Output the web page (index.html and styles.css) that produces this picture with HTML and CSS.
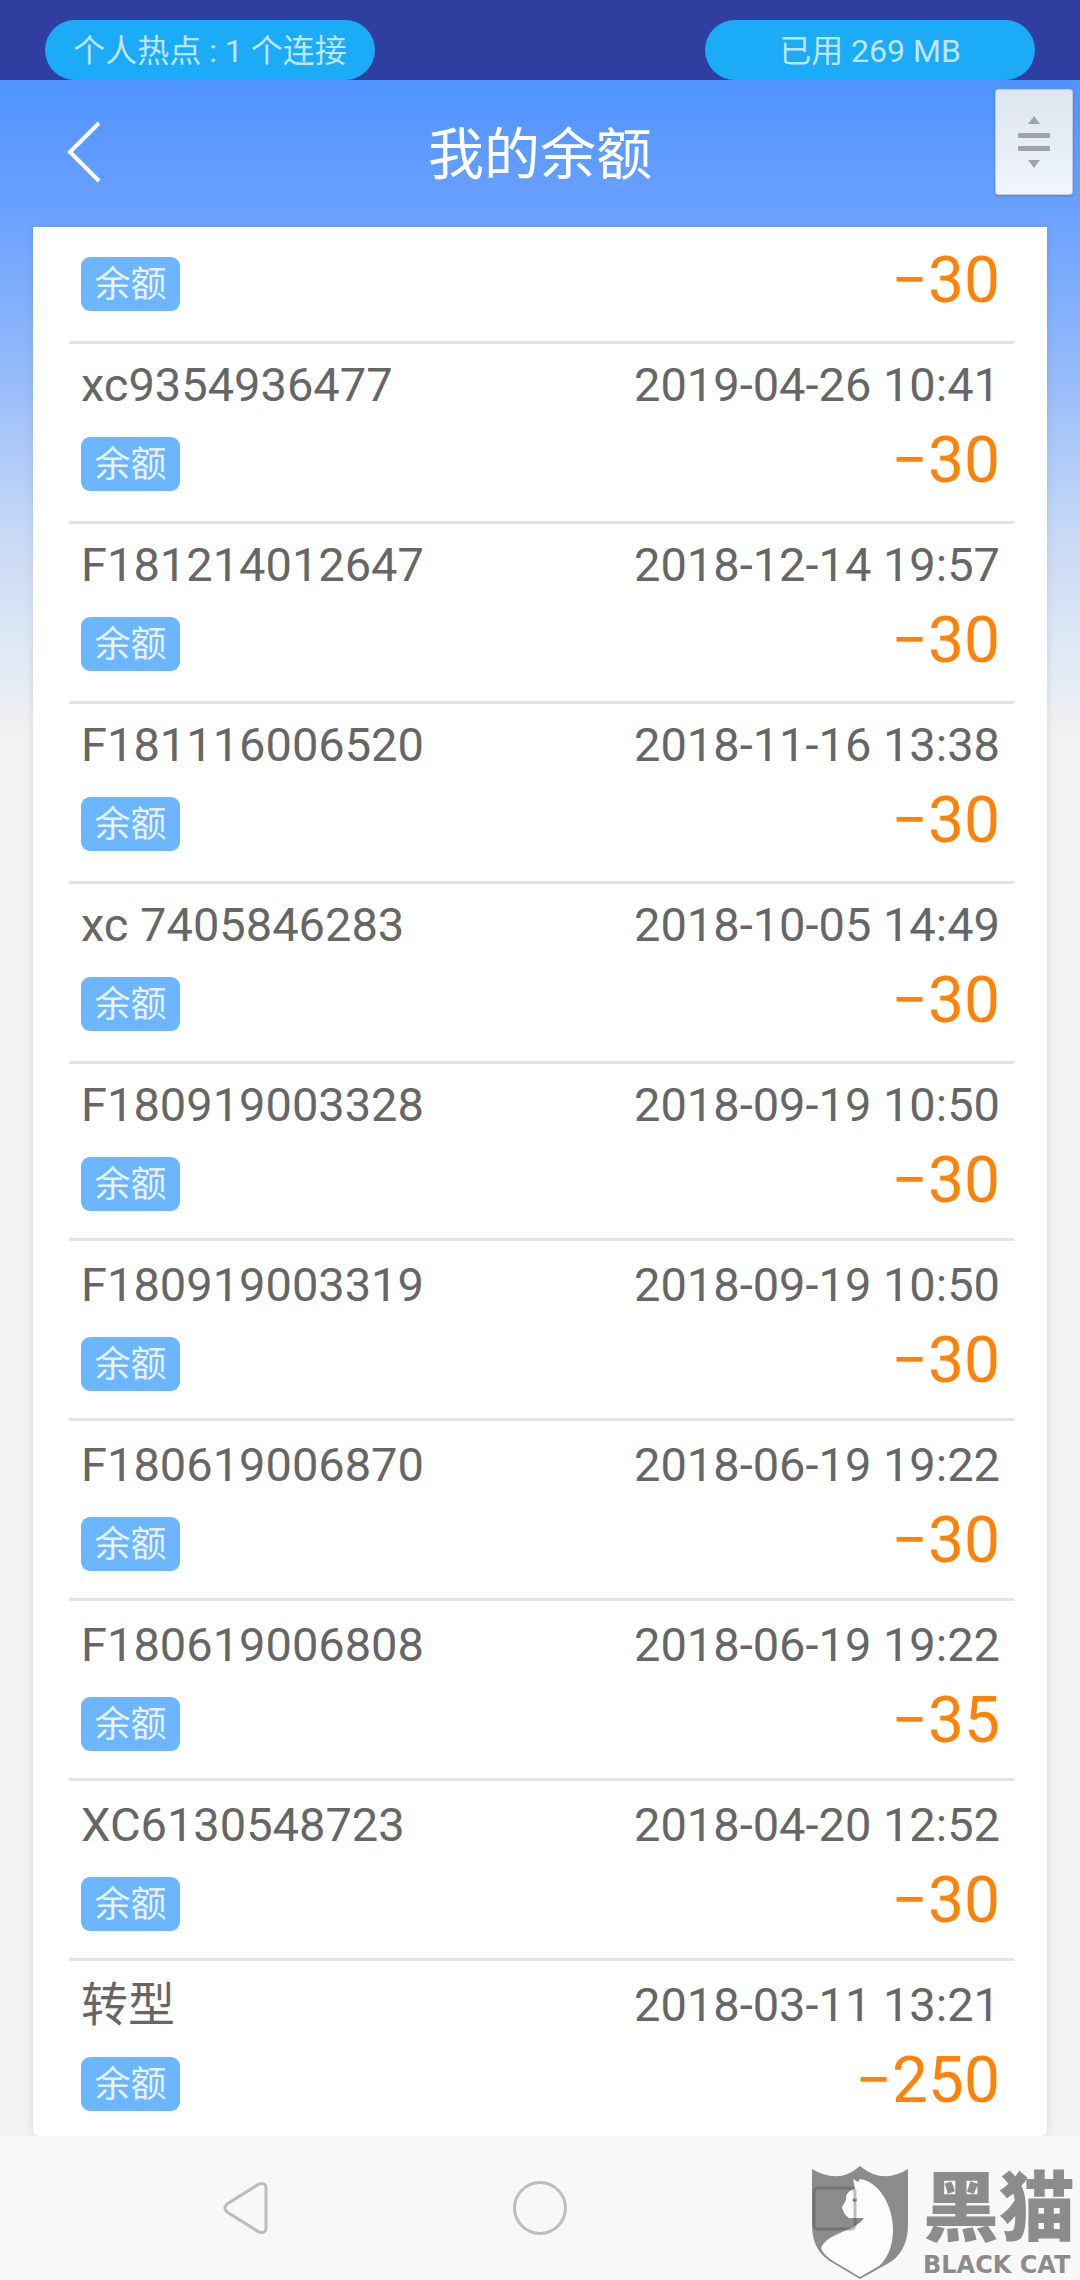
FILE: index.html
```
<!DOCTYPE html>
<html lang="zh-CN">
<head>
  <meta charset="UTF-8">
  <meta name="viewport" content="width=device-width, initial-scale=1.0">
  <title>我的余额</title>
  <link rel="stylesheet" href="styles.css">
</head>
<body>

<!-- 状态栏 -->
  <div class="status-bar">
    <span class="pill">个人热点 : 1 个连接</span>
    <span class="pill">已用 269 MB</span>
  </div>

<!-- 主体 -->
  <div class="page">
    <header class="header">
      <a href="#" class="back" aria-label="返回">
        <svg width="34" height="62" viewBox="0 0 34 62"><path d="M32 2L3 31L32 60" fill="none" stroke="#fff" stroke-width="4"/></svg>
      </a>
      <h1>我的余额</h1>
      <button type="button" class="scroll-handle" aria-label="滚动">
        <svg width="32" height="52" viewBox="0 0 32 52" fill="#a0a3a9">
          <path d="M16 0L22 8H10zM10 44H22L16 52z"/>
          <rect y="17" width="32" height="5" rx="1"/>
          <rect y="30" width="32" height="5" rx="1"/>
        </svg>
      </button>
    </header>

    <main class="card">
      <ul class="list" id="list">
        <li class="item first">
          <span class="tag">余额</span>
          <span class="amount">−30</span>
        </li>
      </ul>
    </main>
  </div>

<!-- 底部导航 -->
  <nav class="nav">
    <button type="button" class="nav-button" aria-label="返回">
      <svg width="46" height="54" viewBox="0 0 46 54"><path d="M36 3L4 23Q0 27 4 31L36 51Q43 53 43 47V7Q43 1 36 3z" fill="none" stroke="#bdbdbd" stroke-width="3"/></svg>
    </button>
    <button type="button" class="nav-button" aria-label="主页">
      <svg width="54" height="54" viewBox="0 0 54 54"><circle cx="27" cy="27" r="25.5" fill="none" stroke="#bdbdbd" stroke-width="3"/></svg>
    </button>
    <button type="button" class="nav-button" aria-label="最近任务"></button>

    <!-- 水印 -->
    <div class="watermark">
      <svg width="98" height="115" viewBox="0 0 98 115">
        <path d="M1 4Q28 20 49 1Q72 20 97 4V60C97 82 86 94 76 99L49 114L22 98C10 91 1 80 1 60z" fill="#8d8b8c"/>
        <path d="M42 14L47 17L49 14C69 17 82 42 82 64C82 82 76 94 68 101L49 112L22 96C16 92 11 87 10 83C17 67 44 67 53 53H38C32 49 33 46 31 43C32 38 36 37 35 31C38 25 42 25 44 23z" fill="#fcfcfc"/>
        <path d="M41 35L44 33V37zM45 33Q47 36 44 37" fill="#777"/>
        <rect x="3" y="23" width="41" height="41" rx="4" fill="none" stroke="#444" stroke-opacity=".35" stroke-width="3"/>
      </svg>
      <div class="brand">
        <span class="brand-cn">黑猫</span>
        <span class="brand-en">BLACK CAT</span>
      </div>
    </div>
  </nav>

  <script>
//余额明细
  const records = [
    ['xc9354936477', '2019-04-26 10:41', '−30'],
    ['F181214012647', '2018-12-14 19:57', '−30'],
    ['F181116006520', '2018-11-16 13:38', '−30'],
    ['xc 7405846283', '2018-10-05 14:49', '−30'],
    ['F180919003328', '2018-09-19 10:50', '−30'],
    ['F180919003319', '2018-09-19 10:50', '−30'],
    ['F180619006870', '2018-06-19 19:22', '−30'],
    ['F180619006808', '2018-06-19 19:22', '−35'],
    ['XC6130548723', '2018-04-20 12:52', '−30'],
    ['转型', '2018-03-11 13:21', '−250']
  ];

  const list = document.getElementById('list');

  records.forEach(([name, time, amount]) => {
    const item = document.createElement('li');
    item.classList.add('item');
    item.innerHTML = `
      <span class="name">${name}</span>
      <time class="time">${time}</time>
      <span class="tag">余额</span>
      <span class="amount">${amount}</span>`;
    list.appendChild(item);
  });
  </script>
</body>
</html>
```

FILE: styles.css
```
* {
  margin: 0;
  padding: 0;
  box-sizing: border-box;
}

body {
  font-family: Roboto, "Noto Sans CJK SC", sans-serif;
  background: #f8f8f8;
  color: #666;
}

button {
  border: none;
  background: none;
}

svg {
  display: block;
}

/* 状态栏 */
.status-bar {
  display: flex;
  justify-content: space-between;
  padding: 20px 45px 0;
  background: #303f9f;
}

.pill {
  width: 330px;
  height: 60px;
  padding-top: 2px;
  line-height: 58px;
  border-radius: 30px;
  background: #1cabf7;
  color: #bde6fd;
  font-size: 32px;
  text-align: center;
}

/* 主体 */
.page {
  background: linear-gradient(#5093ff 0, #68a0ff 120px, #8fb7fa 273px, #b3cdf8 388px, #cadaf5 464px, #d9e5f5 541px, #e9edf4 617px, #f2f2f2 660px);
}

.header {
  position: relative;
  display: flex;
  justify-content: center;
  align-items: center;
  height: 147px;
  padding-bottom: 3px;
}

.header h1 {
  padding-bottom: 6px;
  color: #fff;
  font-size: 56px;
  font-weight: 400;
}

.back {
  position: absolute;
  left: 67px;
}

.scroll-handle {
  position: absolute;
  top: 9px;
  right: 7px;
  display: flex;
  justify-content: center;
  align-items: center;
  width: 78px;
  height: 106px;
  border: 1px solid #c4cbd8;
  border-radius: 3px;
  background: linear-gradient(#dee5ef, #f0f5ff);
  box-shadow: 0 1px 3px rgba(0, 0, 0, 0.2);
}

/* 明细列表 */
.card {
  margin: 0 33px;
  padding: 0 33px 0 36px;
  background: #fff;
  border-radius: 0 0 6px 6px;
  box-shadow: 0 0 9px rgba(0, 0, 0, 0.1);
}

.list {
  list-style: none;
}

.item {
  display: grid;
  grid-template-columns: 1fr auto;
  grid-template-rows: 72px 60px;
  row-gap: 13px;
  align-items: center;
  height: 180px;
  padding: 5px 14px 0 12px;
  border-top: 3px solid #e4e4e4;
}

.item.first {
  grid-template-rows: 60px;
  height: 114px;
  padding-top: 27px;
  border-top: none;
}

.item:nth-child(6) {
  height: 177px;
}

.item:nth-child(n+7) {
  padding-top: 8px;
}

.item:last-child {
  height: 178px;
}

.name,
.time {
  font-size: 47px;
  line-height: 72px;
}

.tag {
  justify-self: start;
  width: 99px;
  height: 54px;
  padding-top: 2px;
  line-height: 52px;
  border-radius: 9px;
  background: #6cb6ff;
  color: #e6f3ff;
  font-size: 36px;
  text-align: center;
}

.amount {
  justify-self: end;
  padding-bottom: 6px;
  color: #ff8208;
  font-size: 64px;
  line-height: 54px;
}

/* 底部导航 */
.nav {
  position: relative;
  display: flex;
  justify-content: center;
  height: 144px;
  background: #f8f8f8;
}

.nav-button {
  display: flex;
  justify-content: center;
  align-items: center;
  width: 294px;
}

/* 水印 */
.watermark {
  position: absolute;
  right: 0;
  bottom: 0;
  display: flex;
  align-items: flex-end;
  gap: 14px;
  color: #8d8b8c;
}

.brand {
  display: flex;
  flex-direction: column;
  width: 157px;
}

.brand-cn {
  font-size: 76px;
  font-weight: 900;
  line-height: 82px;
}

.brand-en {
  font-family: "DejaVu Sans", sans-serif;
  font-size: 24px;
  font-weight: 700;
  line-height: 30px;
  white-space: nowrap;
}
```
